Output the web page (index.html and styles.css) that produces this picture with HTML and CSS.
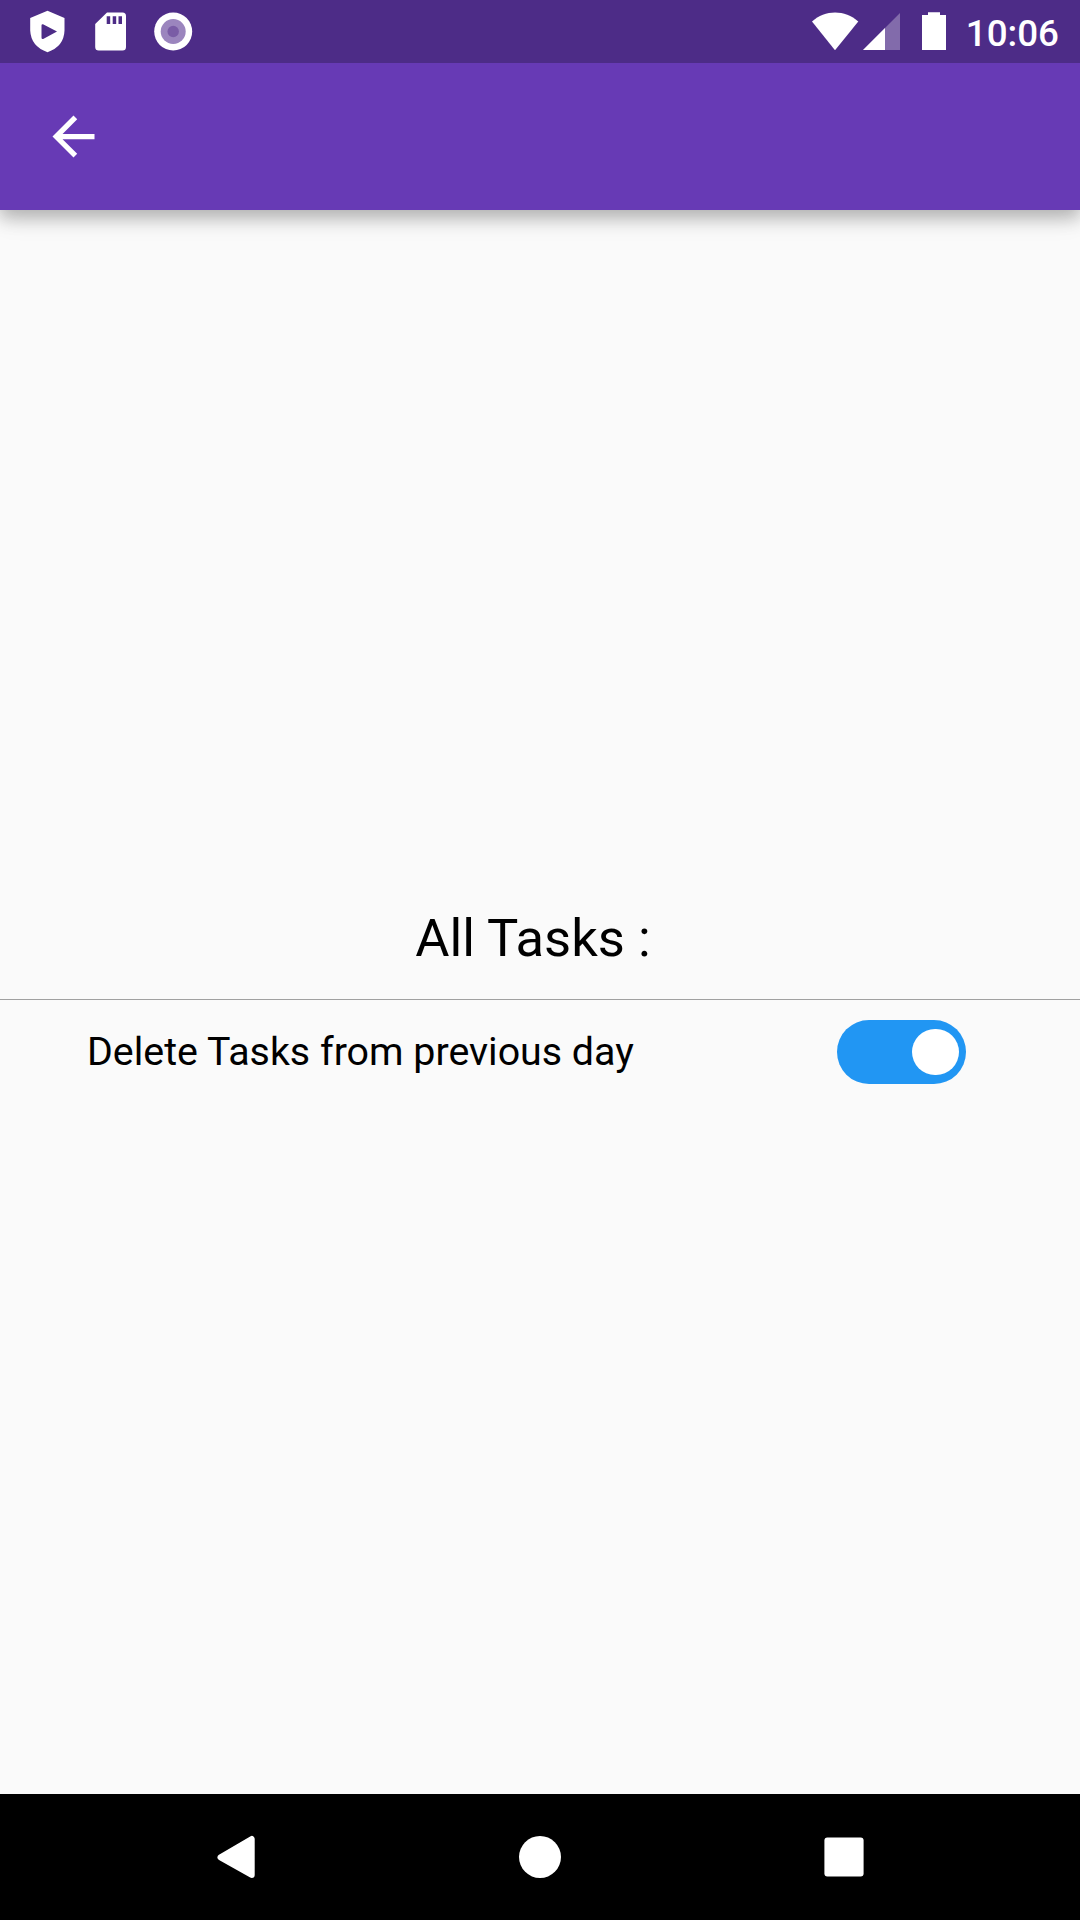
FILE: index.html
```
<!DOCTYPE html>
<html lang="en">
<head>
<meta charset="utf-8">
<title>Settings</title>
<link rel="stylesheet" href="styles.css">
</head>
<body>
<div class="screen">
  <header class="status-bar">
    <div class="notifications">
      <svg class="icon" width="80" height="63" viewBox="0 0 80 63"><path fill="#fff" fill-rule="evenodd" d="M31.500 10.700 48.500 18V30.500Q48 46.500 31.500 52.200 15 46.500 14.200 30.500V18ZM27 24.300Q25.500 24 25.500 25.500V37.500Q25.500 39.400 27.200 39L41 31.400Z" transform="translate(16)"/></svg>
      <svg class="icon" width="63" height="63" viewBox="0 0 63 63"><path fill="#fff" fill-rule="evenodd" d="M27 12.500H42.500Q46 12.500 46 16V47Q46 50.500 42.500 50.500H18.700Q15.200 50.500 15.200 47V24ZM26.700 16.300V24H30.200V16.300ZM32.700 16.300V24H36.200V16.300ZM38.500 16.300V24H42V16.300Z"/></svg>
      <svg class="icon" width="63" height="63" viewBox="0 0 63 63"><circle cx="30.200" cy="31.500" r="19" fill="#fff"/><circle cx="30.200" cy="31.500" r="12.500" fill="#9b85be"/><circle cx="30.200" cy="31.500" r="5.700" fill="#7a5ca6"/></svg>
    </div>
    <div class="system">
      <svg class="icon" width="50" height="63" viewBox="0 0 50 63"><path fill="#fff" d="M2 21.500C15 9.500 35 9.500 48.300 21.500L25 50.200Z"/></svg>
      <svg class="icon" width="40" height="63" viewBox="10 0 40 63"><path fill="#fff" fill-opacity=".3" d="M50 13V50H13Z"/><path fill="#fff" d="M35 28V50H13Z"/></svg>
      <svg class="icon battery" width="24" height="63" viewBox="0 0 24 63"><path fill="#fff" d="M6 12.200H18V15H24V50H0V15H6Z"/></svg>
      <span class="clock">10:06</span>
    </div>
  </header>
  <nav class="app-bar">
    <svg class="icon" width="63" height="63" viewBox="0 0 24 24"><path fill="#fff" d="M20 11H7.830l5.590-5.590L12 4l-8 8 8 8 1.410-1.410L7.830 13H20v-2z"/></svg>
  </nav>
  <main class="content">
    <h1 class="title">All Tasks :</h1>
    <div class="setting">
      <span class="label">Delete Tasks from previous day</span>
      <div class="switch"><div class="knob"></div></div>
    </div>
  </main>
  <footer class="nav-bar">
    <svg class="icon" width="304" height="126" viewBox="0 0 304 126"><path fill="#fff" stroke="#fff" stroke-width="6" stroke-linejoin="round" d="M136.500 63.300 167.700 45V81Z"/></svg>
    <svg class="icon" width="304" height="126" viewBox="0 0 304 126"><circle fill="#fff" cx="152" cy="63" r="21"/></svg>
    <svg class="icon" width="304" height="126" viewBox="0 0 304 126"><rect fill="#fff" x="132.400" y="43.400" width="39.200" height="39.200" rx="3"/></svg>
  </footer>
</div>
</body>
</html>
```
FILE: styles.css
```
body {
  margin: 0;
  font-family: Roboto, sans-serif;
  color: #000;
}

.screen {
  display: flex;
  flex-direction: column;
  width: 1080px;
  height: 1920px;
  overflow: hidden;
  background: #fafafa;
}

.icon {
  display: block;
  flex: none;
}

.status-bar {
  position: relative;
  z-index: 1;
  display: flex;
  justify-content: space-between;
  height: 63px;
  background: #4d2c87;
}

.notifications,
.system {
  display: flex;
}

.system {
  padding-right: 21px;
}

.battery {
  margin-left: 22px;
}

.clock {
  margin-left: 20px;
  font-size: 36.75px;
  font-weight: 500;
  line-height: 67px;
  color: #fff;
}

.app-bar {
  display: flex;
  align-items: center;
  height: 147px;
  padding-left: 42px;
  background: #673ab5;
  box-shadow: 0 8px 16px rgba(0, 0, 0, 0.22), 0 6px 26px rgba(0, 0, 0, 0.12);
}

.content {
  display: flex;
  flex: 1;
  flex-direction: column;
  justify-content: center;
  padding-top: 8px;
}

.title {
  margin: 0;
  padding: 0 14px 30px 0;
  border-bottom: 1px solid #a0a0a0;
  font-size: 52.5px;
  font-weight: 400;
  line-height: 62px;
  text-align: center;
}

.setting {
  display: flex;
  align-items: center;
  justify-content: space-between;
  padding: 20px 114px 20px 87px;
}

.label {
  font-size: 39.375px;
  line-height: 46px;
}

.switch {
  display: flex;
  align-items: center;
  justify-content: flex-end;
  box-sizing: border-box;
  width: 129px;
  height: 64.400px;
  margin-bottom: 0.600px;
  padding-right: 7.500px;
  border-radius: 33px;
  background: #2196f3;
}

.knob {
  width: 46.500px;
  height: 46.500px;
  border-radius: 50%;
  background: #fff;
}

.nav-bar {
  display: flex;
  justify-content: center;
  height: 126px;
  background: #000;
}
```
